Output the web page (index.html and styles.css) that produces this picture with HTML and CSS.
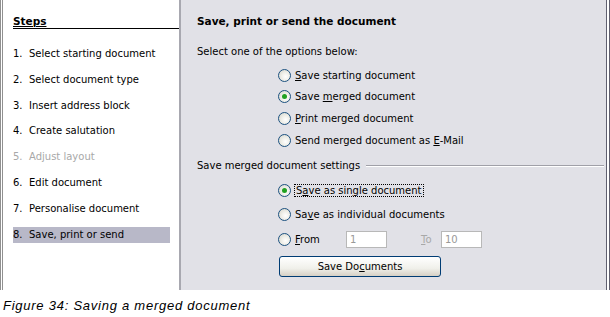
FILE: index.html
```html
<!DOCTYPE html>
<html lang="en">
<head>
    <meta charset="UTF-8">
    <title>Mail Merge Wizard</title>
    <link rel="stylesheet" href="styles.css">
</head>
<body>
    <div class="dialog">
        <div class="steps">
            <h2>Steps</h2>
            <ol>
                <li><span class="num">1.</span>Select starting document</li>
                <li><span class="num">2.</span>Select document type</li>
                <li><span class="num">3.</span>Insert address block</li>
                <li><span class="num">4.</span>Create salutation</li>
                <li class="disabled"><span class="num">5.</span>Adjust layout</li>
                <li><span class="num">6.</span>Edit document</li>
                <li><span class="num">7.</span>Personalise document</li>
                <li class="current"><span class="num">8.</span>Save, print or send</li>
            </ol>
        </div>
        <div class="main">
            <h1>Save, print or send the document</h1>
            <p class="intro">Select one of the options below:</p>
            <div class="options">
                <label class="radio"><span class="dot"></span><span><u>S</u>ave starting document</span></label>
                <label class="radio"><span class="dot checked"></span><span>Save <u>m</u>erged document</span></label>
                <label class="radio"><span class="dot"></span><span><u>P</u>rint merged document</span></label>
                <label class="radio"><span class="dot"></span><span>Send merged document as <u>E</u>-Mail</span></label>
            </div>
            <div class="group">
                <span>Save merged document settings</span>
                <span class="rule"></span>
            </div>
            <div class="options settings">
                <label class="radio"><span class="dot checked"></span><span class="focus">S<u>a</u>ve as sin<u>g</u>le document</span></label>
                <label class="radio"><span class="dot"></span><span>Sa<u>v</u>e as individual documents</span></label>
                <div class="radio from-row">
                    <span class="dot"></span><span class="from-label"><u>F</u>rom</span>
                    <span class="field">1</span>
                    <span class="to-label"><u>T</u>o</span>
                    <span class="field">10</span>
                </div>
                <button type="button">Save Do<u>c</u>uments</button>
            </div>
        </div>
    </div>
    <p class="caption">Figure 34: Saving a merged document</p>
</body>
</html>
```

FILE: styles.css
```css
body {
    margin: 0;
    width: 610px;
    font-family: Tahoma, "DejaVu Sans", sans-serif;
    font-size: 10px;
    color: #000;
    background: #fff;
}
u {
    text-decoration: underline;
    text-underline-offset: 1px;
}
.dialog {
    display: flex;
    height: 290px;
    border-left: 3px double #909090;
    border-right: 4px double #606070;
}
.steps {
    width: 176px;
    background: #fff;
    border-right: 2px solid #a8a8b0;
}
.steps h2 {
    margin: 15px 0 0 10px;
    padding-bottom: 1px;
    font-size: 10.5px;
    font-weight: bold;
    text-decoration: underline;
    border-bottom: 1px solid #000;
}
.steps ol {
    list-style: none;
    margin: 17px 0 0 0;
    padding: 0;
}
.steps li {
    margin-left: 10px;
    width: 157px;
    height: 16px;
    line-height: 16px;
    margin-bottom: 9.8px;
}
.steps .num {
    display: inline-block;
    width: 16px;
}
.steps li.disabled {
    color: #a8a8a8;
}
.steps li.current {
    background: #b8b8c8;
}
.main {
    flex: 1;
    background: #e1e1e7;
    padding: 15px 0 0 16px;
}
.main h1 {
    margin: 0;
    font-size: 10.5px;
    font-weight: bold;
}
.intro {
    margin: 19px 0 0 0;
}
.options {
    display: flex;
    flex-direction: column;
    align-items: flex-start;
    margin: 10px 0 0 81px;
    gap: 5.7px;
}
.radio {
    display: flex;
    align-items: center;
    height: 16px;
}
.dot {
    width: 11px;
    height: 11px;
    border: 1px solid #1c5180;
    border-radius: 50%;
    background: radial-gradient(circle at 60% 60%, #fff 0, #f0f0ea 40%, #d2d2c8 100%);
    margin-right: 4px;
    position: relative;
    flex: none;
}
.dot.checked::after {
    content: "";
    position: absolute;
    left: 3px;
    top: 3px;
    width: 5px;
    height: 5px;
    border-radius: 50%;
    background: #21a121;
}
.group {
    display: flex;
    align-items: center;
    margin: 12px 2px 0 0;
}
.group .rule {
    flex: 1;
    margin-left: 6px;
    border-top: 1px solid #a0a0a8;
    border-bottom: 1px solid #fff;
}
.settings {
    margin-top: 11px;
    gap: 8.5px;
}
.focus {
    outline: 1px dotted #000;
    padding: 0 1px;
}
.from-label {
    width: 51px;
}
.field {
    width: 36px;
    height: 15px;
    line-height: 15px;
    padding-left: 3px;
    border: 1px solid #b8b8b8;
    background: #fff;
    color: #999;
}
.to-label {
    width: 54px;
    padding-left: 34px;
    box-sizing: border-box;
    color: #a8a8a8;
}
.main button {
    margin: 0 0 0 1px;
    width: 162px;
    height: 21px;
    font-family: inherit;
    font-size: 10px;
    border: 1px solid #003c74;
    border-radius: 3px;
    background: linear-gradient(#fff, #f0f0ea 60%, #d6d0c5);
    padding: 0;
}
.caption {
    margin: 8px 0 0 3px;
    font-family: "Liberation Sans", Arial, sans-serif;
    font-style: italic;
    font-size: 13px;
    letter-spacing: 0.75px;
}
```
